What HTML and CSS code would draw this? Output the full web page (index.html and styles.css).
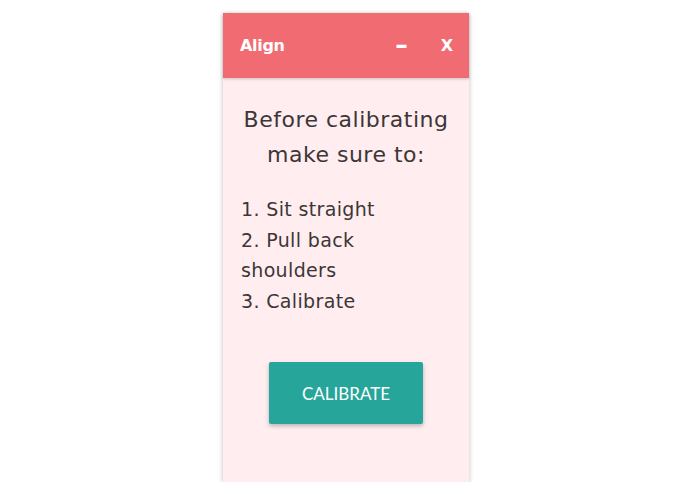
FILE: index.html
```html
<!DOCTYPE html>
<html lang="en">
<head>
    <meta charset="UTF-8">
    <title>Align</title>
    <link rel="stylesheet" href="styles.css">
</head>
<body>

<div class="window">
    <div class="titlebar">
        <div class="title">Align</div>
        <div class="controls">
            <span class="ctrl min">&ndash;</span>
            <span class="ctrl">X</span>
        </div>
    </div>

    <div class="content">
        <div class="intro">Before calibrating make sure to:</div>
        <div class="steps">
            <div>1. Sit straight</div>
            <div>2. Pull back shoulders</div>
            <div>3. Calibrate</div>
        </div>
        <button class="calibrate">CALIBRATE</button>
    </div>
</div>

</body>
</html>
```

FILE: styles.css
```css
body {
    margin: 0;
    background: #fff;
    font-family: 'DejaVu Sans', sans-serif;
    color: #3d3636;
}

.window {
    width: 246px;
    height: 469px;
    margin: 13px 0 0 223px;
    background: #ffedf0;
    box-shadow: 0 1px 5px rgba(0, 0, 0, 0.25);
    display: flex;
    flex-direction: column;
}

.titlebar {
    height: 65px;
    background: #f06c72;
    color: #fff;
    display: flex;
    align-items: center;
    justify-content: space-between;
    padding: 0 16px 0 17px;
    box-shadow: 0 1px 3px rgba(0, 0, 0, 0.2);
}

.title {
    font-size: 16px;
    font-weight: bold;
    letter-spacing: -0.3px;
}

.controls {
    display: flex;
    align-items: center;
    gap: 33px;
    font-size: 16px;
    font-weight: bold;
}

.min {
    font-size: 25px;
    line-height: 16px;
    margin-top: -2px;
}

.content {
    padding: 24px 18px 0 18px;
    display: flex;
    flex-direction: column;
}

.intro {
    font-size: 22px;
    line-height: 35px;
    letter-spacing: 0.5px;
    text-align: center;
}

.steps {
    margin-top: 22px;
    max-width: 195px;
    font-size: 19px;
    line-height: 30.5px;
    letter-spacing: 0.35px;
}

.calibrate {
    align-self: center;
    margin-top: 46px;
    width: 154px;
    height: 62px;
    border: none;
    border-radius: 2px;
    background: #26a69a;
    color: #fff;
    font-family: 'Lato', sans-serif;
    font-size: 17px;
    box-shadow: 0 2px 4px rgba(0, 0, 0, 0.25);
    cursor: pointer;
}
```
